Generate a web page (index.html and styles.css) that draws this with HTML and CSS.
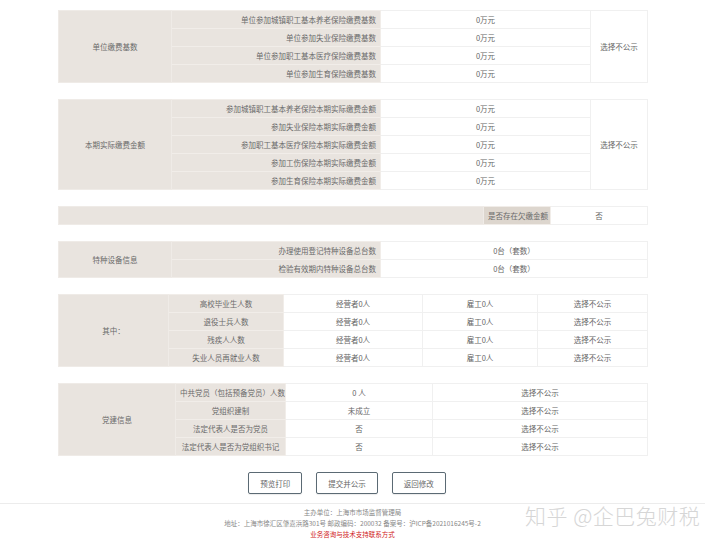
FILE: index.html
```html
<!DOCTYPE html>
<html lang="zh-CN">
<head>
  <meta charset="UTF-8">
  <meta name="viewport" content="width=device-width, initial-scale=1.0">
  <title>年报信息预览</title>
  <link rel="stylesheet" href="styles.css">
</head>
<body>
  <div class="page">
    <div class="content">
      <table class="info">
        <colgroup><col style="width:113px"><col style="width:209px"><col style="width:210px"><col></colgroup>
        <tr>
          <td class="head" rowspan="4">单位缴费基数</td>
          <td class="label">单位参加城镇职工基本养老保险缴费基数</td>
          <td class="val">0万元</td>
          <td class="val" rowspan="4">选择不公示</td>
        </tr>
        <tr><td class="label">单位参加失业保险缴费基数</td><td class="val">0万元</td></tr>
        <tr><td class="label">单位参加职工基本医疗保险缴费基数</td><td class="val">0万元</td></tr>
        <tr><td class="label">单位参加生育保险缴费基数</td><td class="val">0万元</td></tr>
      </table>

      <table class="info">
        <colgroup><col style="width:113px"><col style="width:209px"><col style="width:210px"><col></colgroup>
        <tr>
          <td class="head" rowspan="5">本期实际缴费金额</td>
          <td class="label">参加城镇职工基本养老保险本期实际缴费金额</td>
          <td class="val">0万元</td>
          <td class="val" rowspan="5">选择不公示</td>
        </tr>
        <tr><td class="label">参加失业保险本期实际缴费金额</td><td class="val">0万元</td></tr>
        <tr><td class="label">参加职工基本医疗保险本期实际缴费金额</td><td class="val">0万元</td></tr>
        <tr><td class="label">参加工伤保险本期实际缴费金额</td><td class="val">0万元</td></tr>
        <tr><td class="label">参加生育保险本期实际缴费金额</td><td class="val">0万元</td></tr>
      </table>

      <table class="info">
        <colgroup><col style="width:425px"><col style="width:67px"><col></colgroup>
        <tr>
          <td class="head"></td>
          <td class="label dark">是否存在欠缴金额</td>
          <td class="val">否</td>
        </tr>
      </table>

      <table class="info">
        <colgroup><col style="width:113px"><col style="width:209px"><col></colgroup>
        <tr>
          <td class="head" rowspan="2">特种设备信息</td>
          <td class="label">办理使用登记特种设备总台数</td>
          <td class="val">0台（套数）</td>
        </tr>
        <tr><td class="label">检验有效期内特种设备总台数</td><td class="val">0台（套数）</td></tr>
      </table>

      <table class="info">
        <colgroup><col style="width:110px"><col style="width:115px"><col style="width:139px"><col style="width:115px"><col></colgroup>
        <tr>
          <td class="head" rowspan="4">其中：</td>
          <td class="label center">高校毕业生人数</td>
          <td class="val">经营者0人</td>
          <td class="val">雇工0人</td>
          <td class="val">选择不公示</td>
        </tr>
        <tr><td class="label center">退役士兵人数</td><td class="val">经营者0人</td><td class="val">雇工0人</td><td class="val">选择不公示</td></tr>
        <tr><td class="label center">残疾人人数</td><td class="val">经营者0人</td><td class="val">雇工0人</td><td class="val">选择不公示</td></tr>
        <tr><td class="label center">失业人员再就业人数</td><td class="val">经营者0人</td><td class="val">雇工0人</td><td class="val">选择不公示</td></tr>
      </table>

      <table class="info">
        <colgroup><col style="width:117px"><col style="width:110px"><col style="width:147px"><col></colgroup>
        <tr>
          <td class="head" rowspan="4">党建信息</td>
          <td class="label center">中共党员（包括预备党员）人数</td>
          <td class="val">0 人</td>
          <td class="val">选择不公示</td>
        </tr>
        <tr><td class="label center">党组织建制</td><td class="val">未成立</td><td class="val">选择不公示</td></tr>
        <tr><td class="label center">法定代表人是否为党员</td><td class="val">否</td><td class="val">选择不公示</td></tr>
        <tr><td class="label center">法定代表人是否为党组织书记</td><td class="val">否</td><td class="val">选择不公示</td></tr>
      </table>

      <div class="actions">
        <button class="btn">预览打印</button>
        <button class="btn">提交并公示</button>
        <button class="btn">返回修改</button>
      </div>
    </div>

    <footer class="footer">
      <p>主办单位：上海市市场监督管理局</p>
      <p>地址：上海市徐汇区肇嘉浜路301号 邮政编码：200032 备案号：沪ICP备2021016245号-2</p>
      <p class="red">业务咨询与技术支持联系方式</p>
    </footer>

    <div class="watermark">知乎 @企巴兔财税</div>
  </div>
</body>
</html>
```

FILE: styles.css
```css
body {
  margin: 0;
  padding: 0;
  background: #fff;
  font-family: "Noto Sans CJK SC", "Noto Sans", sans-serif;
  color: #666;
}
.page {
  position: relative;
  width: 705px;
  min-height: 545px;
  overflow: hidden;
}
.content {
  width: 590px;
  margin: 0 0 0 58px;
  padding-top: 10px;
}
.info {
  width: 590px;
  border-collapse: collapse;
  table-layout: fixed;
  margin-bottom: 16px;
  font-size: 7.5px;
}
.info tr {
  height: 18px;
}
.info td {
  padding: 0 4px;
  line-height: 10px;
  white-space: nowrap;
  overflow: hidden;
}
.info .head {
  background: #e9e4df;
  border: 1px solid #efebe7;
  text-align: center;
  color: #6a6a6a;
}
.info .label {
  background: #e9e4df;
  border: 1px solid #f1ede9;
  text-align: right;
  color: #6a6a6a;
}
.info .label.center {
  text-align: center;
}
.info .label.dark {
  background: #ddd6ce;
  padding: 0 2px;
}
.info .val {
  background: #fff;
  border: 1px solid #f0f0f0;
  text-align: center;
  color: #666;
}
.actions {
  display: flex;
  justify-content: center;
  gap: 14px;
  padding-right: 12px;
  height: 31px;
}
.btn {
  height: 22px;
  padding: 0 11px;
  background: #fff;
  border: 1px solid #5b6a74;
  border-radius: 2px;
  color: #666;
  font-family: "Noto Sans CJK SC", sans-serif;
  font-size: 7.5px;
  cursor: pointer;
  box-shadow: 0 1px 1px rgba(0, 0, 0, 0.08);
}
.footer {
  border-top: 1px solid #ececec;
  padding-top: 3px;
  text-align: center;
  font-size: 6.5px;
  color: #888;
}
.footer p {
  margin: 0;
  line-height: 11px;
}
.footer .red {
  color: #d02020;
}
.watermark {
  position: absolute;
  left: 525px;
  top: 500px;
  font-size: 21px;
  font-weight: 300;
  line-height: 30px;
  color: #d6d6d6;
  white-space: nowrap;
  letter-spacing: 0.5px;
}
```
